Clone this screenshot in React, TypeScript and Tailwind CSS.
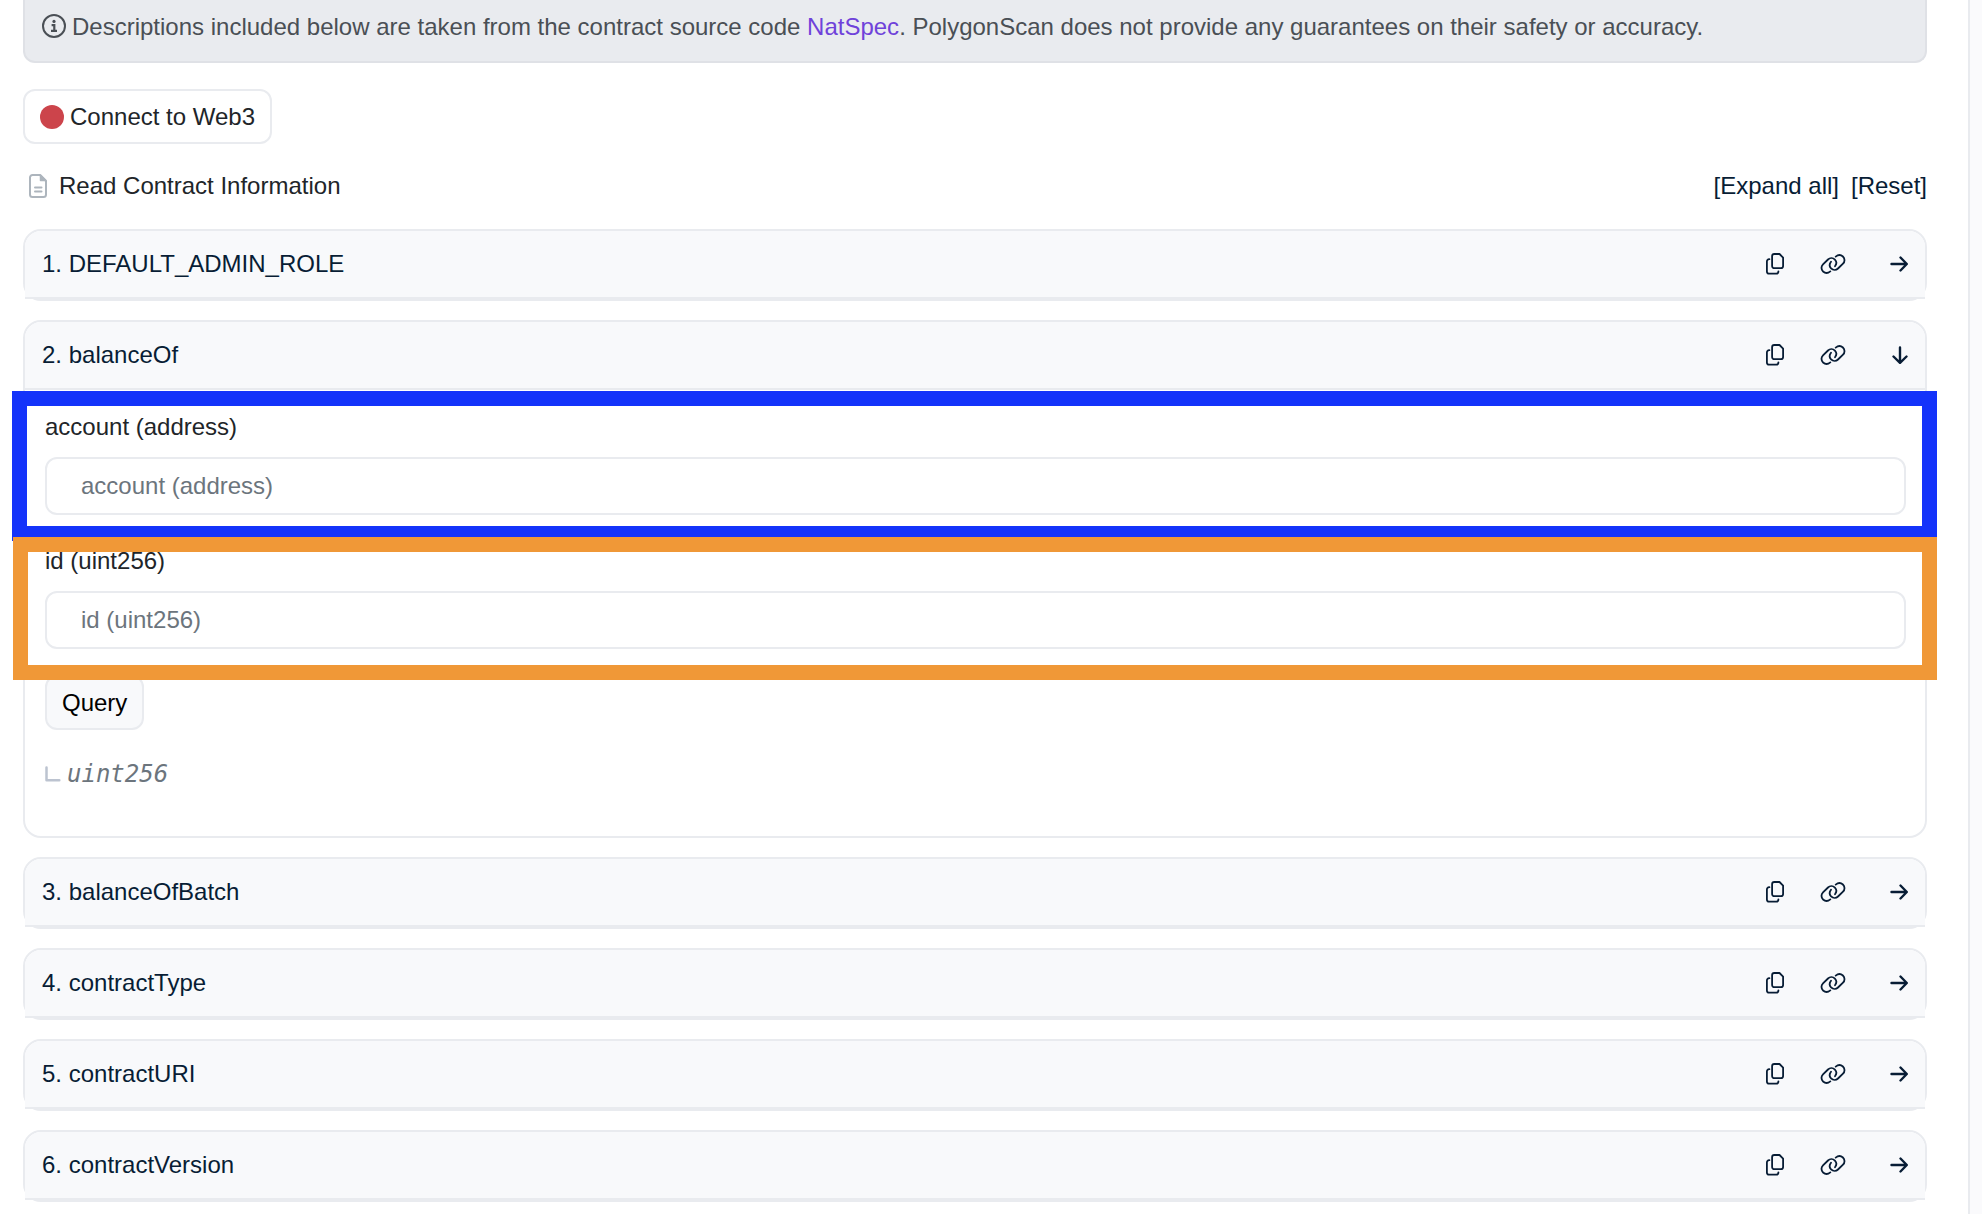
import React from "react";

function InfoIcon() {
  return (
    <svg viewBox="0 0 24 24" className="size-6 shrink-0" fill="none" aria-hidden="true">
      <circle cx="12" cy="12" r="11" stroke="currentColor" strokeWidth="2" />
      <circle cx="12" cy="7.4" r="1.6" fill="currentColor" />
      <path d="M9.6 11.2h2.700v5.400M9 16.800h6" stroke="currentColor" strokeWidth="2.200" />
    </svg>
  );
}

function DocIcon() {
  return (
    <svg viewBox="0 0 18 24" className="h-6 w-[18px]" fill="none" stroke="#adb5bd" aria-hidden="true">
      <path d="M1 3.5A2.5 2.5 0 0 1 3.5 1H11l6 6v13.500a2.500 2.500 0 0 1-2.500 2.500h-11A2.500 2.500 0 0 1 1 20.500z" strokeWidth="2" strokeLinejoin="round" />
      <path d="M11.500 1v5.500H17z" fill="#adb5bd" strokeWidth="1.500" strokeLinejoin="round" />
      <path d="M6 13.500h6.500M6 17.500h6.500" strokeWidth="2" strokeLinecap="round" />
    </svg>
  );
}

function CopyIcon() {
  return (
    <svg viewBox="0 0 18 22" className="h-[22px] w-[18px]" fill="none" stroke="currentColor" strokeWidth="1.800" strokeLinecap="round" strokeLinejoin="round" aria-hidden="true">
      <path d="M8.300 1h5.200l3.600 3.600v8.400a2.200 2.200 0 0 1-2.200 2.200H8.300a2.200 2.200 0 0 1-2.200-2.200V3.200A2.200 2.200 0 0 1 8.300 1z" />
      <path d="M3.400 6.200h-.3a2.200 2.200 0 0 0-2.200 2.200v10.100a2.200 2.200 0 0 0 2.200 2.200h7.100a2.200 2.200 0 0 0 2.200-2.200v-.2" />
    </svg>
  );
}

const chainLoop = "M10.300 17.400c-2.300 1.900-5.200 1.900-7.200.1-2.100-2-2.100-5.200-.1-7.200L8 5.500c2-1.900 5-1.800 6.900.1 1.800 1.900 1.700 4.600.1 6.600";

function LinkIcon() {
  return (
    <svg viewBox="0 0 26 20" className="h-5 w-[26px]" fill="none" stroke="currentColor" strokeWidth="1.800" strokeLinecap="round" aria-hidden="true">
      <path d={chainLoop} />
      <path d={chainLoop} transform="rotate(180 13 10)" />
    </svg>
  );
}

function ArrowIcon({ down = false }: { down?: boolean }) {
  return (
    <svg viewBox="0 0 18 18" className="size-[18px]" fill="none" stroke="currentColor" strokeWidth="2.400" strokeLinecap="round" strokeLinejoin="round" aria-hidden="true">
      {down ? <path d="M10 1.500v15M3.500 10.500l6.500 6.300 6.500-6.300" /> : <path d="M1.500 9h15M10.500 2.500L16.800 9l-6.300 6.500" />}
    </svg>
  );
}

function MethodCard({ title, open = false, children }: { title: string; open?: boolean; children?: React.ReactNode }) {
  return (
    <section className="rounded-[18px] border-2 border-[#e9ebef]">
      <div className="flex h-[68px] items-center rounded-t-2xl border-b-2 border-[#e9ebef] bg-[#f8f9fb] px-[17px] text-[#081d35]">
        <button type="button" aria-expanded={open} className="flex-1 text-left">
          {title}
        </button>
        <div className="flex items-center">
          <button type="button" aria-label="Copy method name" className="mr-9">
            <CopyIcon />
          </button>
          <button type="button" aria-label="Copy permalink" className="mr-11">
            <LinkIcon />
          </button>
          <button type="button" aria-label={open ? "Collapse" : "Expand"}>
            <ArrowIcon down={open} />
          </button>
        </div>
      </div>
      {children}
    </section>
  );
}

function Field({ id, label }: { id: string; label: string }) {
  return (
    <div>
      <label htmlFor={id} className="block leading-9">
        {label}
      </label>
      <input
        id={id}
        type="text"
        placeholder={label}
        className="mt-3 block h-[58px] w-full rounded-xl border-2 border-[#e9ebef] bg-white px-[34px] placeholder:text-[#6c757d]"
      />
    </div>
  );
}

export default function App() {
  return (
    <div className="flex min-h-screen bg-[#fafafc] font-['Liberation_Sans',Arial,sans-serif] text-[24px] leading-9 text-[#212529]">
      <main className="mr-3 min-w-0 flex-1 border-r-2 border-[#e9ebef] bg-white pr-[41px] pl-[23px]">
        <div className="flex h-[63px] items-start gap-1.5 rounded-b-xl border-2 border-t-0 border-[#dfe1e6] bg-[#e9ebef] px-[17px] pt-[9px] text-[#4a4f55]">
          <span className="flex h-[34px] items-center">
            <InfoIcon />
          </span>
          <p>
            Descriptions included below are taken from the contract source code{" "}
            <a href="#natspec" className="text-[#6f42da]">NatSpec</a>. PolygonScan does not provide any guarantees on their safety or accuracy.
          </p>
        </div>

        <button type="button" className="mt-[26px] flex h-[55px] items-center gap-1.5 rounded-xl border-2 border-[#e9ebef] px-[15px]">
          <span className="size-6 rounded-full bg-[#cc444b]" />
          Connect to Web3
        </button>

        <div className="mt-6 mb-[25px] flex items-center justify-between">
          <h1 className="flex items-center gap-3 pl-1.5">
            <DocIcon />
            Read Contract Information
          </h1>
          <div className="flex gap-3 text-[#081d35]">
            <a href="#expand">[Expand all]</a>
            <a href="#reset">[Reset]</a>
          </div>
        </div>

        <div className="flex flex-col gap-[19px] pb-4">
          <MethodCard title="1. DEFAULT_ADMIN_ROLE" />
          <MethodCard title="2. balanceOf" open>
            <div className="pt-[19px] pr-[19px] pb-11 pl-5">
              <div className="relative">
                <Field id="account" label="account (address)" />
                <div className="pointer-events-none absolute -top-[18px] -right-[31px] -bottom-[26px] -left-[33px] border-[15px] border-[#1433fa]" />
              </div>
              <div className="relative mt-7">
                <Field id="token-id" label="id (uint256)" />
                <div className="pointer-events-none absolute -top-[6px] -right-[31px] -bottom-[31px] -left-8 border-[15px] border-[#f09837]" />
              </div>
              <button type="button" className="mt-[26px] flex h-[55px] items-center rounded-xl border-2 border-[#e9ebef] bg-[#f8f9fb] px-[15px] text-black">
                Query
              </button>
              <div className="mt-[26px] flex items-center gap-1.5 text-[#6c757d]">
                <svg viewBox="0 0 16 16" className="size-4" fill="none" stroke="#bcc3d0" strokeWidth="2.500" strokeLinecap="round" strokeLinejoin="round" aria-hidden="true">
                  <path d="M1.500 1.500v12.800h12.800" />
                </svg>
                <em className="font-['DejaVu_Sans_Mono',monospace]">uint256</em>
              </div>
            </div>
          </MethodCard>
          <MethodCard title="3. balanceOfBatch" />
          <MethodCard title="4. contractType" />
          <MethodCard title="5. contractURI" />
          <MethodCard title="6. contractVersion" />
        </div>
      </main>
    </div>
  );
}
